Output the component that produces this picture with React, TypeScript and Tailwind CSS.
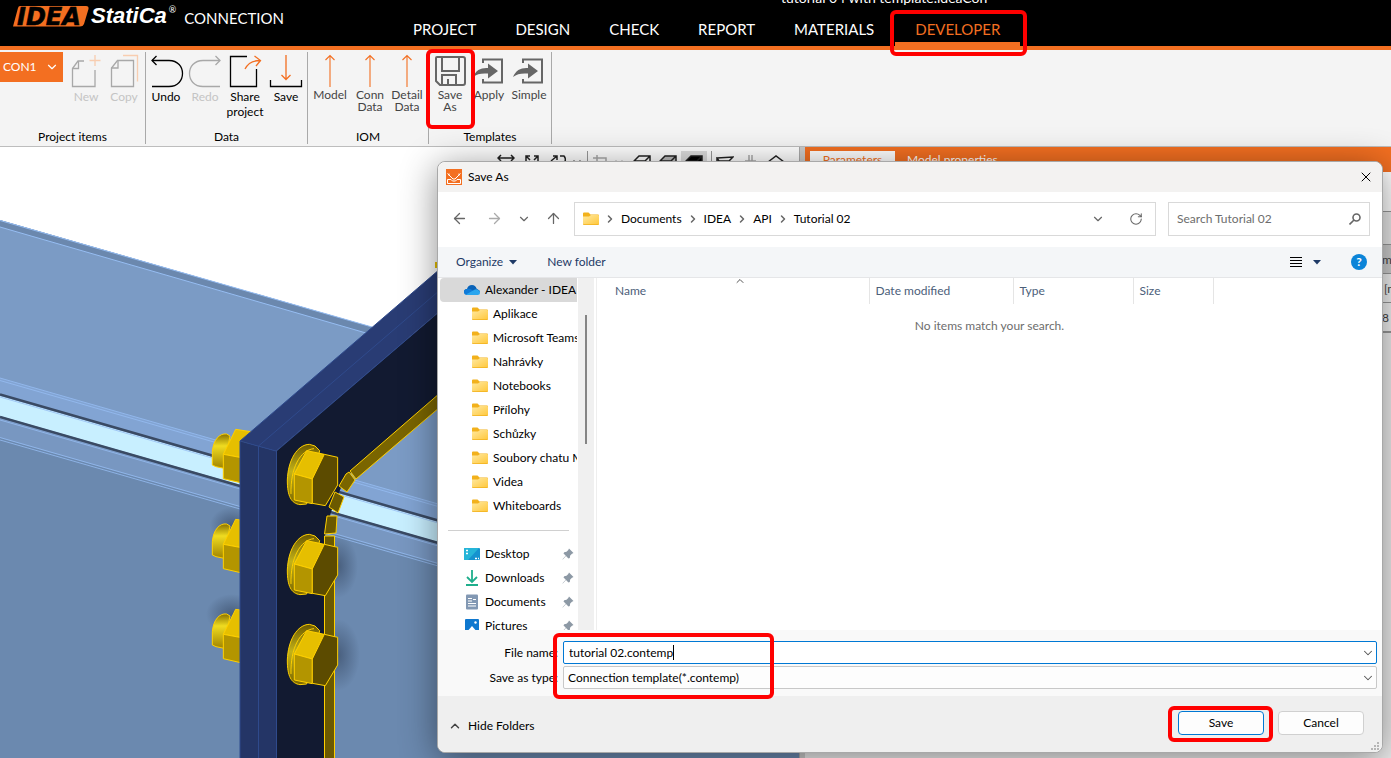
import type { ReactNode } from "react";
import {
  ArrowLeft,
  ArrowRight,
  ArrowUp,
  ChevronDown,
  ChevronRight,
  ChevronUp,
  RotateCw,
  X,
} from "lucide-react";

const tabs = ["PROJECT", "DESIGN", "CHECK", "REPORT", "MATERIALS"];

const folders = [
  "Aplikace",
  "Microsoft Teams",
  "Nahrávky",
  "Notebooks",
  "Přílohy",
  "Schůzky",
  "Soubory chatu Microsoft",
  "Videa",
  "Whiteboards",
];

const path = ["Documents", "IDEA", "API", "Tutorial 02"];

function Marker({ className }: { className: string }) {
  return (
    <div
      className={`pointer-events-none absolute z-10 rounded-md border-4 border-[#ff0000] ${className}`}
    />
  );
}

/* ================= RIBBON ================= */

function RibbonGroup({
  title,
  className,
  children,
}: {
  title: string;
  className: string;
  children: ReactNode;
}) {
  return (
    <section
      className={`flex h-[92px] shrink-0 flex-col justify-between border-r border-[#a9a9a9] ${className}`}
    >
      <div className="flex items-start">{children}</div>
      <h2 className="text-center leading-[15px] text-black">{title}</h2>
    </section>
  );
}

function RibbonButton({
  label,
  className,
  children,
}: {
  label: string;
  className: string;
  children: ReactNode;
}) {
  return (
    <button className={`flex flex-col items-center text-center ${className}`}>
      <svg
        className="h-[37px] w-[38px] overflow-visible"
        viewBox="0 0 38 37"
        fill="none"
        stroke="currentColor"
        strokeWidth="1.3"
      >
        {children}
      </svg>
      <span>{label}</span>
    </button>
  );
}

function UpArrow() {
  return <path d="M19 35V4M14.500 8L19 3.500L23.500 8" stroke="#f36f21" strokeWidth="1.1" />;
}

function ImportArrow() {
  return (
    <>
      <path d="M13 11V7.500H32V30.500H13V27" stroke="#666" strokeWidth="2" />
      <path
        d="M3 25C6 18 11 15.500 18 16V11.500L28 19L18 26.500V21.500C11 21 7 22 3 25Z"
        fill="#666"
        stroke="none"
      />
    </>
  );
}

function Ribbon() {
  return (
    <div className="flex border-b border-[#bdbdbd] bg-[#f4f4f4] pt-[2px] pb-[2px]">
      <RibbonGroup title="Project items" className="w-[146px]">
        <button className="mr-1 flex h-[30px] w-[63px] items-center justify-between bg-[#f36f21] pr-1 pl-[3px] text-white">
          CON1
          <ChevronDown size={14} />
        </button>
        <RibbonButton label="New" className="w-[38px] leading-[15px] text-[#c4c4c4]">
          <g stroke="#a8a8a8">
            <path d="M17 9H11L5.500 16.500V34.500H28V18" />
            <path d="M11.500 9V16.500H5.500" />
          </g>
          <path d="M28 3V14M22.500 8.500H33.500" stroke="#f8cdb0" />
        </RibbonButton>
        <RibbonButton label="Copy" className="w-[38px] leading-[15px] text-[#c4c4c4]">
          <g stroke="#a8a8a8">
            <path d="M12.500 8.500H28.500V34.500H6.500V16Z" />
            <path d="M13 8.500V16H6.500" />
          </g>
          <path d="M18 3.500H32.500V29.500" stroke="#f8cdb0" />
        </RibbonButton>
      </RibbonGroup>

      <RibbonGroup title="Data" className="w-[162px]">
        <RibbonButton label="Undo" className="w-[40px] leading-[15px]">
          <path d="M5 8.500H22C40 8.500 40 34.500 22 34.500H5" />
          <path d="M9.500 4L5 8.500L9.500 13" />
        </RibbonButton>
        <RibbonButton label="Redo" className="w-[38px] leading-[15px] text-[#c4c4c4]">
          <g stroke="#a8a8a8">
            <path d="M34 8.500H17C-1 8.500 -1 34.500 17 34.500H34" />
            <path d="M29.500 4L34 8.500L29.500 13" />
          </g>
        </RibbonButton>
        <RibbonButton label="Share project" className="w-[42px] leading-[15px]">
          <path d="M21 4.500H4.500V34.500H30.500V17" />
          <path d="M19 17C22 11 27 8.500 34 8.500M28.500 4L34.500 8.500L30 14" stroke="#f36f21" />
        </RibbonButton>
        <RibbonButton label="Save" className="w-[40px] leading-[15px]">
          <path d="M3.500 28V34.500H34.500V28" />
          <path d="M19 3V27M14.500 23L19 27.500L23.500 23" stroke="#f36f21" />
        </RibbonButton>
      </RibbonGroup>

      <RibbonGroup title="IOM" className="w-[121px]">
        <RibbonButton label="Model" className="w-[44px] leading-3 text-[#444]">
          <UpArrow />
        </RibbonButton>
        <RibbonButton label="Conn Data" className="w-[36px] leading-3 text-[#444]">
          <UpArrow />
        </RibbonButton>
        <RibbonButton label="Detail Data" className="w-[38px] leading-3 text-[#444]">
          <UpArrow />
        </RibbonButton>
      </RibbonGroup>

      <RibbonGroup title="Templates" className="w-[123px]">
        <div className="relative">
          <RibbonButton label="Save As" className="w-[42px] px-1 leading-3 text-[#444]">
            <g stroke="#666" strokeWidth="2">
              <path d="M6 5H32Q34 5 34 7V31Q34 33 32 33H9L5 29V6Q5 5 6 5Z" />
              <path d="M11 5V19H28V5M11 33V23H25V33M17 33V27" />
            </g>
          </RibbonButton>
          <Marker className="-top-[3px] -left-[3px] h-[80px] w-[49px]" />
        </div>
        <RibbonButton label="Apply" className="w-[36px] leading-3 text-[#444]">
          <ImportArrow />
        </RibbonButton>
        <RibbonButton label="Simple" className="w-[44px] leading-3 text-[#444]">
          <ImportArrow />
        </RibbonButton>
      </RibbonGroup>
    </div>
  );
}

/* ================= HEADER ================= */

function Header() {
  return (
    <header className="relative flex h-[50px] items-start overflow-visible border-b-4 border-[#f36f21] bg-black text-white">
      <div className="flex w-[393px] shrink-0 items-center pt-1 pl-[13px]">
        <svg className="h-[22px] w-[76px] shrink-0" viewBox="0 0 76 22">
          <path d="M7 1H73Q76 1 75.500 4L71 19Q70 21.500 67 21.500H0L5 3Q5.500 1 7 1Z" fill="#f36f21" />
          <text
            x="4"
            y="19.500"
            fontFamily="DejaVu Sans"
            fontSize="24"
            fontWeight="bold"
            fontStyle="italic"
            stroke="#000"
            strokeWidth="0.600"
          >
            IDEA
          </text>
        </svg>
        <span className="ml-0.5 font-['Liberation_Sans'] text-[22px] leading-[22px] font-bold italic">
          StatiCa
        </span>
        <span className="self-start pl-0.5 text-[9px] leading-3">®</span>
        <span className="ml-2 pt-1 text-[15px] leading-5">CONNECTION</span>
      </div>
      <nav className="flex h-full items-end text-[15px] leading-5">
        {tabs.map((tab) => (
          <a key={tab} href="#" className="pr-[19px] pb-[7px] pl-5">
            {tab}
          </a>
        ))}
        <a
          href="#"
          className="relative ml-0.5 border-b-4 border-[#f36f21] px-5 pb-[3px] text-[#f36f21]"
        >
          DEVELOPER
          <Marker className="-top-[9px] -right-[7px] -bottom-[14px] -left-[5px]" />
        </a>
      </nav>
      <p className="absolute -top-[10px] left-[781px] text-[14px] leading-4">
        tutorial 04 with template.ideaCon
      </p>
    </header>
  );
}

/* ================= 3D SCENE ================= */

function BoltHead({ y }: { y: number }) {
  return (
    <g transform={`translate(180 ${y}) scale(0.3333)`} stroke="#ffd000" strokeWidth="3">
      <path
        d="M322 240C324 180 352 134 388 133L405 138L419 152L380 312L360 314C334 310 322 290 322 240Z"
        fill="url(#washer)"
      />
      <path d="M333 282C331 205 360 150 402 146" fill="none" />
      <path d="M343 222L380 152L433 163L397 237Z" fill="#e6bf00" />
      <path d="M343 222L397 237V311L343 300Z" fill="#b39500" />
      <path d="M433 163L473 172V255L436 317L397 310V237Z" fill="#5c4b00" />
    </g>
  );
}

function BoltNut({ y }: { y: number }) {
  return (
    <g transform={`translate(180 ${y}) scale(0.3333)`} stroke="#ffd000" strokeWidth="3">
      <path
        d="M97 195V155C100 120 118 99 140 102L150 108L132 205L108 200Z"
        fill="url(#shank)"
      />
      <path d="M130 163L167 88L212 95L190 174Z" fill="#e6bf00" />
      <path d="M130 163L190 174V250L130 236Z" fill="#b39500" />
    </g>
  );
}

function Scene() {
  return (
    <svg
      className="min-h-0 w-full flex-1"
      viewBox="0 173 800 585"
      preserveAspectRatio="xMinYMin slice"
      fill="none"
    >
      <defs>
        <linearGradient id="washer" x1="0" y1="0" x2="0" y2="1">
          <stop offset="0" stopColor="#6b5900" />
          <stop offset="0.450" stopColor="#c2b21a" />
          <stop offset="1" stopColor="#7a6600" />
        </linearGradient>
        <linearGradient id="shank" x1="0" y1="0" x2="0" y2="1">
          <stop offset="0" stopColor="#8a7200" />
          <stop offset="0.350" stopColor="#f0dc20" />
          <stop offset="1" stopColor="#a08300" />
        </linearGradient>
        <radialGradient id="shade">
          <stop offset="0" stopColor="#2c3c55" stopOpacity="0.550" />
          <stop offset="1" stopColor="#2c3c55" stopOpacity="0" />
        </radialGradient>
      </defs>

      {/* beam */}
      <path d="M0 220L372 327L800 440V758H0Z" fill="#7b9bc5" />
      <path d="M0 220L372 327L366 333L0 227Z" fill="#6b88ae" />
      <path d="M0 220.500L372 327M0 227L366 333" stroke="#96bdf2" />
      <path d="M0 378L800 608V758H0Z" fill="#82a4d3" />
      <path d="M0 419L800 649V758H0Z" fill="#7897c1" />
      <path d="M0 438L800 668V758H0Z" fill="#6b89af" />
      <path d="M0 396L800 626V646L0 416Z" fill="#c8efff" />
      <path d="M0 394.500L800 624.500M0 417L800 647" stroke="#3a4a63" strokeWidth="2.500" />
      <path
        d="M0 378L800 608M0 380.500L800 610.500M0 397L800 627M0 420L800 650M0 437.500L800 667.500M0 440L800 670"
        stroke="#96bdf2"
        strokeWidth="0.800"
      />
      <ellipse cx="232" cy="525" rx="22" ry="18" fill="url(#shade)" />
      <ellipse cx="232" cy="614" rx="26" ry="20" fill="url(#shade)" />
      <ellipse cx="338" cy="566" rx="20" ry="32" fill="url(#shade)" />
      <ellipse cx="338" cy="655" rx="22" ry="36" fill="url(#shade)" />

      <BoltNut y={400} />
      <BoltNut y={490} />
      <BoltNut y={580} />

      {/* end plate */}
      <path d="M276 451L440 311V398L345 478L331 512L324 540V758H276Z" fill="#121a31" />
      <path d="M240 441L440 269V311L276 451Z" fill="#293c74" />
      <path d="M240 441L276 451V758H240Z" fill="#243566" />
      <path
        d="M240 758V441L440 269M258.500 758V446L440 290M276.500 758V451L440 311M240 441L276 451"
        stroke="#2f4a8c"
      />

      {/* welds */}
      <g stroke="#ffd000" strokeWidth="1">
        <path d="M350 471L440 393V407L356 479Z" fill="#7a6500" />
        <path d="M346 474L349 472L355 480L347 492L339 486Z" fill="#7a6500" />
        <path d="M335 492L344 497L338 513L329 507Z" fill="#6b5900" />
        <path d="M327 516H337L336 533L324.500 534Z" fill="#6b5900" />
        <path d="M324.500 536H334.500V760H324.500Z" fill="#6b5900" />
      </g>
      <path d="M436.500 262V268" stroke="#e6bf00" strokeWidth="3" />

      <BoltHead y={400} />
      <BoltHead y={490} />
      <BoltHead y={580} />
    </svg>
  );
}

function ViewIcon({ d, className = "" }: { d: string; className?: string }) {
  return (
    <button className={`grid h-full w-[26px] place-items-center ${className}`}>
      <svg width="18" height="18" viewBox="0 0 18 18" fill="none" stroke="currentColor" strokeWidth="1.500">
        <path d={d} />
      </svg>
    </button>
  );
}

function ViewToolbar() {
  const cube = "M1 15V8L6 3H17V9L12 15ZM1 8H12V15M12 8L17 3";
  return (
    <div className="flex h-[26px] shrink-0 justify-end bg-white pt-1 pr-[10px] text-[#222]">
      <ViewIcon d="M1 5H17M4 2L1 5L4 8M14 2L17 5L14 8" />
      <ViewIcon d="M3 8V3H7M11 3H15V8M3 3L7 7M15 3L11 7M3 14L7 10M15 14L11 10" />
      <ViewIcon d="M2 8L8 3M4 3H8V7M11 3H15Q17 5 16 9L11 14" />
      <button className="w-4">
        <ChevronDown size={12} />
      </button>
      <ViewIcon d="M5 2V15H17M1 5H14V17" className="border-l border-[#999] text-[#aaa]" />
      <button className="w-4 text-[#aaa]">
        <ChevronDown size={12} />
      </button>
      <ViewIcon d={cube} />
      <ViewIcon d={cube} className="[&_svg]:fill-[#bbb]" />
      <ViewIcon d={cube} className="bg-[#ddd] [&_svg]:fill-black" />
      <ViewIcon d="M1 5L17 4L13 8H3ZM1 5V14H12" className="ml-1 border-l border-[#999]" />
      <ViewIcon d="M8 2V15M11 2V15M4 8H15" className="text-[#aaa]" />
      <ViewIcon d="M1 9L9 3L17 9L15 15H3Z" />
    </div>
  );
}

function PropertiesPane() {
  return (
    <aside className="flex w-[586px] shrink-0 flex-col overflow-hidden bg-[#eee] text-[#444]">
      <div className="flex h-[25px] bg-[#f36f21] pt-1 pl-[5px]">
        <button className="w-[85px] bg-white pb-1 leading-4 text-[#f36f21]">Parameters</button>
        <button className="px-3 pb-1 leading-4 text-white">Model properties</button>
      </div>
      <div className="h-10 border-b border-[#999] bg-white" />
      <div className="h-[33px] border-b border-[#999] bg-[#eaeaea]" />
      <div className="h-[29px] border-b border-[#999] bg-[#cfcfcf] pl-[577px] leading-[30px]">mm</div>
      <div className="h-[29px] border-b border-[#999] bg-[#f2f2f2] pl-[579px] leading-[30px]">[mm]</div>
      <div className="h-[30px] border-b-2 border-[#999] bg-[#f2f2f2] pl-[577px] leading-[30px]">8</div>
    </aside>
  );
}

/* ================= DIALOG ================= */

function FolderIcon() {
  return (
    <svg className="h-4 w-4 shrink-0" viewBox="0 0 16 16">
      <path d="M0 2.500Q0 1.500 1 1.500H5.500L7.500 3.500H15Q16 3.500 16 4.500V13Q16 14 15 14H1Q0 14 0 13Z" fill="#f2b11c" />
      <path d="M0 5.500H6L8 4H15Q16 4 16 5V12.500Q16 13.300 15 13.300H1Q0 13.300 0 12.500Z" fill="url(#folderFill)" />
      <defs>
        <linearGradient id="folderFill" x1="0" y1="0" x2="1" y2="1">
          <stop offset="0" stopColor="#ffe9a0" />
          <stop offset="1" stopColor="#ffc83d" />
        </linearGradient>
      </defs>
    </svg>
  );
}

function PinIcon() {
  return (
    <svg className="mr-[3px] ml-auto h-3 w-3 shrink-0" viewBox="0 0 12 12">
      <path
        d="M7 0.500L11.500 5L10 5.800L8.200 7.500L7.800 10L6.500 10.500L4 8L0.800 11.500L0.500 11.200L3.800 7.800L1.500 5.500L2.200 4.200L4.500 3.800L6.300 2Z"
        fill="#8d99a5"
      />
    </svg>
  );
}

function QuickItem({ label, children }: { label: string; children: ReactNode }) {
  return (
    <li className="flex h-6 items-center pl-6">
      <svg className="mr-[5px] h-4 w-4 shrink-0" viewBox="0 0 16 16">
        {children}
      </svg>
      <a href="#">{label}</a>
      <PinIcon />
    </li>
  );
}

function Sidebar() {
  return (
    <div className="flex w-[159px] shrink-0 border-r border-[#eee]">
      <ul className="w-[139px] shrink-0 overflow-hidden pl-0.5 whitespace-nowrap">
        <li className="flex h-6 items-center overflow-hidden rounded-l-sm bg-[#d9d9d9] pl-6">
          <svg className="mr-[5px] h-4 w-4 shrink-0" viewBox="0 0 16 16">
            <path d="M3 7Q4 3 8 3Q11.500 3 12.500 6.500L16 9Q16 11 13 9L3 12Q0 12 0 9.500Q0 7.200 3 7Z" fill="#0a63b8" />
            <path d="M3 7Q5.500 6 8 8L14 11L3 13Q0 13 0 10Q0 7.300 3 7Z" fill="#0f7bd8" />
            <path d="M2 12.500L10 8Q12 6.500 14 8Q16 8.500 16 10.500Q16 13 13.500 13H3.500Z" fill="#29a5ee" />
          </svg>
          <a href="#">Alexander - IDEA StatiCa</a>
        </li>
        {folders.map((name) => (
          <li key={name} className="flex h-6 items-center gap-[5px] pl-8">
            <FolderIcon />
            <a href="#">{name}</a>
          </li>
        ))}
        <li className="flex h-6 items-center pr-2 pl-2">
          <hr className="w-full border-[#d0d0d0]" />
        </li>
        <QuickItem label="Desktop">
          <rect x="0" y="2" width="16" height="12" rx="1" fill="#1593cf" />
          <path d="M0 3Q0 2 1 2H15L4 14H1Q0 14 0 13Z" fill="#25b5d8" />
          <path d="M2 4.500H4M2 7.500H4M11 12.500H15" stroke="#fff" strokeWidth="1.300" strokeDasharray="2 1" />
        </QuickItem>
        <QuickItem label="Downloads">
          <path d="M8 0V11M3 7L8 12L13 7M2 15H14" stroke="#1fae8c" strokeWidth="1.800" fill="none" />
        </QuickItem>
        <QuickItem label="Documents">
          <rect x="2" y="0.500" width="12" height="15" rx="1" fill="#8298b3" />
          <path d="M4 4.500H8M4 7H8M4 9.500H12M4 12H12M9 5.500H12" stroke="#fff" strokeWidth="1.200" />
        </QuickItem>
        <QuickItem label="Pictures">
          <rect x="1" y="1" width="14" height="14" rx="1" fill="#0f78cf" />
          <path d="M2 15L8 8L14 15Z" fill="#fff" />
          <circle cx="11.500" cy="4.500" r="1.200" fill="#fff" />
        </QuickItem>
      </ul>
      <div className="ml-px w-4 bg-[#f0f0f0] pt-[37px]">
        <div className="mx-auto h-[129px] w-[2px] bg-[#858585]" />
      </div>
    </div>
  );
}

function FileList() {
  return (
    <div className="min-w-0 flex-1">
      <table className="w-[616px] table-fixed text-left text-[#4c607a]">
        <thead>
          <tr className="h-[26px] [&_th]:border-r [&_th]:border-[#e5e5e5] [&_th]:font-normal">
            <th className="relative w-[272px] pl-[18px]">
              Name
              <ChevronUp size={12} className="absolute -top-[3px] left-[137px] text-[#555]" />
            </th>
            <th className="w-[144px] pl-1.5">Date modified</th>
            <th className="w-[120px] pl-1.5">Type</th>
            <th className="w-[80px] pl-1.5">Size</th>
          </tr>
        </thead>
      </table>
      <p className="pt-3.5 text-center leading-4 text-[#6d6d6d]">No items match your search.</p>
    </div>
  );
}

function Triangle() {
  return (
    <svg width="8" height="5" viewBox="0 0 8 5">
      <path d="M0 0H8L4 4.500Z" fill="#1e3a66" />
    </svg>
  );
}

function SaveDialog() {
  return (
    <div
      role="dialog"
      aria-label="Save As"
      className="absolute top-[161px] right-2 bottom-[5px] left-[437px] flex flex-col rounded-lg border border-[#a8a8a8] bg-white shadow-[0_6px_36px_rgba(0,0,0,0.45)]"
    >
      {/* title bar */}
      <div className="flex h-[30px] shrink-0 items-center rounded-t-lg bg-[#f3f2f1] px-2">
        <svg className="mr-1.5 h-4 w-4" viewBox="0 0 16 16" fill="none" stroke="#fff">
          <path d="M0 0H16V16H0Z" fill="#f36f21" stroke="none" />
          <path d="M1.500 4.500L7 10H9L14.500 4.500M3 6.500V4.500M13 6.500V4.500M1.500 10.500H5L6.500 12H9.500L11 10.500H14.500V14.500H1.500Z" />
        </svg>
        <h1>Save As</h1>
        <button aria-label="Close" className="ml-auto">
          <X size={16} strokeWidth={1.500} />
        </button>
      </div>

      {/* address bar */}
      <div className="flex h-[55px] shrink-0 items-center pr-3 pb-0.5 pl-[13px] text-[#666]">
        <button aria-label="Back">
          <ArrowLeft size={17} strokeWidth={1.800} />
        </button>
        <button aria-label="Forward" className="ml-[18px] text-[#aaa]">
          <ArrowRight size={17} strokeWidth={1.800} />
        </button>
        <button aria-label="Recent" className="ml-3.5">
          <ChevronDown size={14} />
        </button>
        <button aria-label="Up" className="ml-3.5">
          <ArrowUp size={17} strokeWidth={1.800} />
        </button>
        <div className="ml-3 flex h-[34px] min-w-0 flex-1 items-center border border-[#d9d9d9] px-2">
          <FolderIcon />
          {path.map((part) => (
            <span key={part} className="flex items-center text-black">
              <ChevronRight size={12} strokeWidth={3} className="mx-[5px] text-[#666]" />
              <a href="#">{part}</a>
            </span>
          ))}
          <button aria-label="Previous locations" className="mr-6 ml-auto">
            <ChevronDown size={14} />
          </button>
          <button aria-label="Refresh" className="mr-1">
            <RotateCw size={14} strokeWidth={1.800} />
          </button>
        </div>
        <div className="ml-3 flex h-[34px] w-[202px] items-center border border-[#d9d9d9] px-2">
          <input
            aria-label="Search"
            placeholder="Search Tutorial 02"
            className="min-w-0 flex-1 outline-none placeholder:text-[#6d6d6d]"
          />
          <svg width="12" height="12" viewBox="0 0 12 12" fill="none" stroke="#666" strokeWidth="1.600">
            <circle cx="7.500" cy="4.500" r="3.500" />
            <path d="M5 7L0.500 11.500" />
          </svg>
        </div>
      </div>

      {/* command bar */}
      <div className="flex h-[31px] shrink-0 items-center border-b border-[#e5e6e8] bg-[#f4f6f8] pr-[15px] pl-[18px] text-[#1e3a66]">
        <button className="flex items-center gap-1.5">
          Organize <Triangle />
        </button>
        <button className="ml-[30px]">New folder</button>
        <button aria-label="View" className="ml-auto flex items-center gap-[11px]">
          <svg width="12" height="12" viewBox="0 0 12 12" stroke="#000">
            <path d="M0 1.500H12M0 4.500H12M0 7.500H12M0 10.500H12" />
          </svg>
          <Triangle />
        </button>
        <button
          aria-label="Help"
          className="ml-[30px] h-4 w-4 rounded-full bg-[#0b84d8] text-center text-[12px] leading-4 font-bold text-white"
        >
          ?
        </button>
      </div>

      <div className="flex min-h-0 flex-1 overflow-hidden">
        <Sidebar />
        <FileList />
      </div>

      {/* file name */}
      <div className="relative flex h-[66px] shrink-0 flex-col gap-0.5 bg-[#f9f9f9] pt-[11px] pr-[5px]">
        <div className="flex h-[23px] items-center">
          <label htmlFor="file-name" className="w-[125px] shrink-0 pr-[5px] text-right">
            File name:
          </label>
          <div className="flex h-full flex-1 items-center rounded-xs border border-[#0078d4] bg-white px-[5px]">
            <input
              id="file-name"
              defaultValue="tutorial 02.contemp"
              className="field-sizing-content outline-none"
            />
            <span className="h-[15px] w-px bg-black" />
            <ChevronDown size={14} strokeWidth={1.800} className="-mr-1 ml-auto text-[#555]" />
          </div>
        </div>
        <div className="relative flex h-[23px] items-center">
          <label htmlFor="file-type" className="w-[125px] shrink-0 pr-[5px] text-right">
            Save as type:
          </label>
          <select
            id="file-type"
            className="h-full min-w-0 flex-1 appearance-none rounded-xs border border-[#c8c8c8] bg-[#fdfdfd] pl-1"
          >
            <option>Connection template(*.contemp)</option>
          </select>
          <ChevronDown
            size={14}
            strokeWidth={1.800}
            className="pointer-events-none absolute right-0.5 text-[#555]"
          />
        </div>
        <Marker className="top-[3px] left-[115px] h-[66px] w-[221px]" />
      </div>

      {/* footer */}
      <div className="relative flex h-14 shrink-0 items-center rounded-b-lg bg-[#efefef] pr-[18px] pb-0.5 pl-[10px]">
        <button className="flex items-center gap-1.5 pt-1.5">
          <ChevronUp size={14} strokeWidth={2.500} className="text-[#444]" />
          Hide Folders
        </button>
        <div className="relative ml-auto">
          <button className="h-6 w-[86px] rounded-sm border border-[#0078d4] bg-[#fdfdfd]">Save</button>
          <Marker className="-top-[5px] -right-[9px] -left-[10px] h-[36px]" />
        </div>
        <button className="ml-3.5 h-6 w-[86px] rounded-sm border border-[#d0d0d0] bg-[#fdfdfd]">
          Cancel
        </button>
        <svg className="absolute right-[3px] bottom-0.5" width="8" height="8" viewBox="0 0 8 8" fill="#b5b5b5">
          <path d="M6 0H8V2H6ZM6 3H8V5H6ZM3 3H5V5H3ZM6 6H8V8H6ZM3 6H5V8H3ZM0 6H2V8H0Z" />
        </svg>
      </div>
    </div>
  );
}

export default function App() {
  return (
    <main className="relative flex h-screen flex-col overflow-hidden bg-white font-['Lato','Open_Sans',sans-serif] text-[12px] text-black">
      <Header />
      <Ribbon />
      <div className="flex min-h-0 flex-1">
        <div className="flex min-w-0 flex-1 flex-col">
          <ViewToolbar />
          <Scene />
        </div>
        <div className="w-[6px] shrink-0 border-l border-[#aaa] bg-[#ccc]" />
        <PropertiesPane />
      </div>
      <SaveDialog />
    </main>
  );
}
